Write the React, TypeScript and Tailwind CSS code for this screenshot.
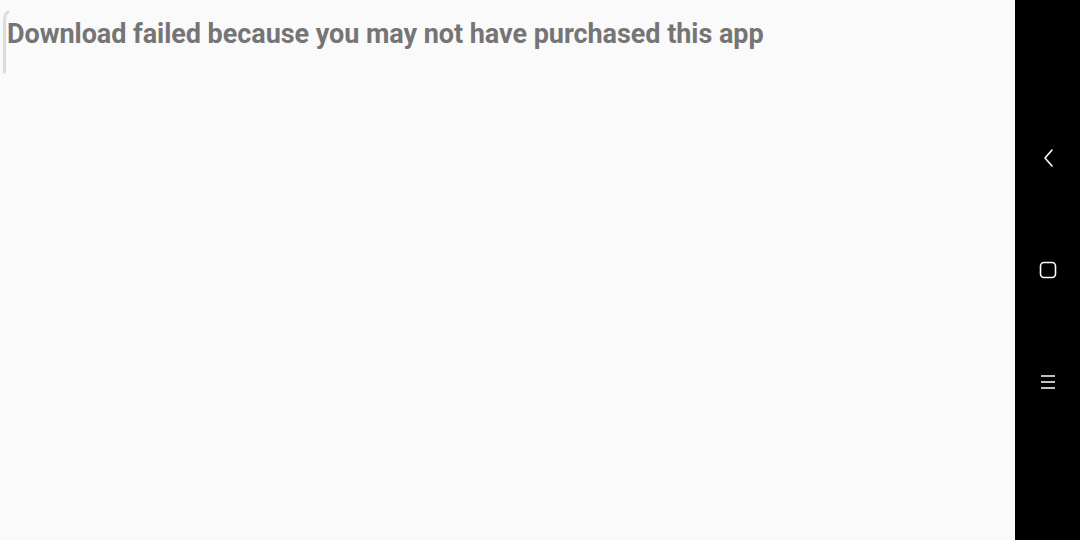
export default function App() {
  return (
    <div className="flex h-[540px] w-[1080px] overflow-hidden bg-[#fafafa] font-['Roboto',sans-serif]">
      <main className="relative flex-1 bg-[#fafafa]">
        <svg className="absolute left-0 top-[10px]" width="10" height="64" viewBox="0 0 10 64">
          <path d="M8 2 Q4.5 4 4.5 12 L4.5 62" fill="none" stroke="#dcdcdc" strokeWidth="3" strokeLinecap="round" />
        </svg>
        <h1 className="pl-[7px] pt-[16px] text-[27px] font-bold leading-[36px] tracking-[-0.05px] text-[#757575]">
          Download failed because you may not have purchased this app
        </h1>
      </main>
      <nav className="flex w-[65px] flex-col items-center bg-black pt-[147px]">
        <button className="ml-[3px] flex h-[22px] w-[22px] items-center justify-center" aria-label="Back">
          <svg width="14" height="20" viewBox="0 0 14 20">
            <path d="M10 2 L3 10 L10 18" fill="none" stroke="#ffffff" strokeWidth="1.6" strokeLinejoin="round" strokeLinecap="round" />
          </svg>
        </button>
        <button className="mt-[90px] flex h-[22px] w-[22px] items-center justify-center" aria-label="Home">
          <svg width="18" height="18" viewBox="0 0 18 18">
            <rect x="1.5" y="1.5" width="15" height="15" rx="3.5" fill="none" stroke="#ffffff" strokeWidth="1.6" />
          </svg>
        </button>
        <button className="mt-[90px] flex h-[22px] w-[22px] items-center justify-center" aria-label="Recents">
          <svg width="16" height="16" viewBox="0 0 16 16">
            <path d="M1 2 H15 M1 8 H15 M1 14 H15" fill="none" stroke="#ffffff" strokeWidth="1.4" />
          </svg>
        </button>
      </nav>
    </div>
  );
}
